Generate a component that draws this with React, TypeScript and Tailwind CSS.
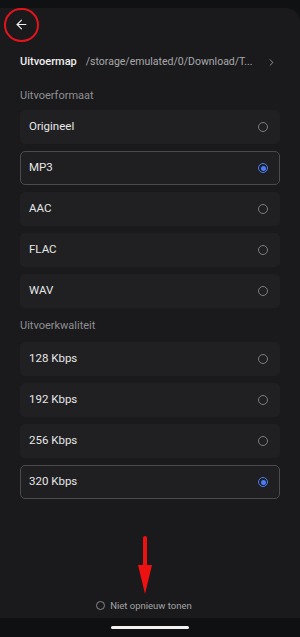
import { ArrowLeft, ChevronRight } from "lucide-react";

const formats = ["Origineel", "MP3", "AAC", "FLAC", "WAV"];
const qualities = ["128 Kbps", "192 Kbps", "256 Kbps", "320 Kbps"];

function Radio({ checked }: { checked: boolean }) {
  if (checked) {
    return (
      <div className="w-[10px] h-[10px] rounded-full border-[1.5px] border-[#4a7cf5] flex items-center justify-center">
        <div className="w-[5px] h-[5px] rounded-full bg-[#4a7cf5]" />
      </div>
    );
  }
  return <div className="w-[10px] h-[10px] rounded-full border-[1.5px] border-[#7d7d80]" />;
}

function OptionCard({ label, checked }: { label: string; checked: boolean }) {
  return (
    <div
      className={
        checked
          ? "h-[34px] rounded-[5px] bg-[#1f1f21] border border-[#4b4b4e] flex items-center justify-between pl-[8px] pr-[11px]"
          : "h-[34px] rounded-[5px] bg-[#202022] border border-transparent flex items-center justify-between pl-[8px] pr-[11px]"
      }
    >
      <span className="text-[11.5px] text-[#e6e6e6]">{label}</span>
      <Radio checked={checked} />
    </div>
  );
}

export default function App() {
  return (
    <div
      className="w-[300px] h-[637px] bg-[#101113] flex flex-col relative overflow-hidden"
      style={{ fontFamily: "Roboto, 'Noto Sans', sans-serif" }}
    >
      {/* top strip */}
      <div className="h-[8px] shrink-0" />

      {/* main panel */}
      <div className="flex-1 bg-[#1a1a1c] rounded-tr-[14px] flex flex-col">
        {/* back */}
        <div className="h-[32px] flex items-center pl-[14px]">
          <ArrowLeft size={15} strokeWidth={1.8} className="text-[#f0f0f0]" />
        </div>

        {/* output folder */}
        <div className="mt-[12px] h-[20px] flex items-center px-[20px]">
          <span className="text-[11px] font-medium text-[#efefef]">Uitvoermap</span>
          <span className="ml-[9px] text-[10.5px] text-[#a9a9ab] whitespace-nowrap">
            /storage/emulated/0/Download/T...
          </span>
          <ChevronRight size={11} strokeWidth={1.8} className="ml-auto mr-[3px] text-[#a9a9ab]" />
        </div>

        {/* format */}
        <div className="mt-[17px] px-[20px] text-[11px] text-[#8f8f92] leading-[14px]">
          Uitvoerformaat
        </div>
        <div className="mt-[7px] px-[20px] flex flex-col gap-[7px]">
          {formats.map((f) => (
            <OptionCard key={f} label={f} checked={f === "MP3"} />
          ))}
        </div>

        {/* quality */}
        <div className="mt-[11px] px-[20px] text-[11px] text-[#8f8f92] leading-[14px]">
          Uitvoerkwaliteit
        </div>
        <div className="mt-[9px] px-[20px] flex flex-col gap-[7px]">
          {qualities.map((q) => (
            <OptionCard key={q} label={q} checked={q === "320 Kbps"} />
          ))}
        </div>

        <div className="flex-1" />

        {/* don't show again */}
        <div className="mb-[5px] pr-[12px] flex items-center justify-center gap-[5px]">
          <div className="w-[9px] h-[9px] rounded-full border border-[#88888b]" />
          <span className="text-[9.5px] text-[#a3a3a6]">Niet opnieuw tonen</span>
        </div>
      </div>

      {/* nav bar */}
      <div className="h-[19px] shrink-0 bg-[#0e1012] flex items-center justify-center">
        <div className="w-[78px] h-[3px] rounded-full bg-[#f2f2f2]" />
      </div>

      {/* annotations */}
      <div className="absolute left-[4px] top-[8px] w-[35px] h-[34px] rounded-full border-[2.5px] border-[#e3141b]" />
      <svg className="absolute left-[136px] top-[535px]" width="18" height="60" viewBox="0 0 18 60">
        <line x1="9" y1="3" x2="9" y2="34" stroke="#ee1111" strokeWidth="4" strokeLinecap="round" />
        <polygon points="2,30 16,30 9,59" fill="#ee1111" />
      </svg>
    </div>
  );
}
